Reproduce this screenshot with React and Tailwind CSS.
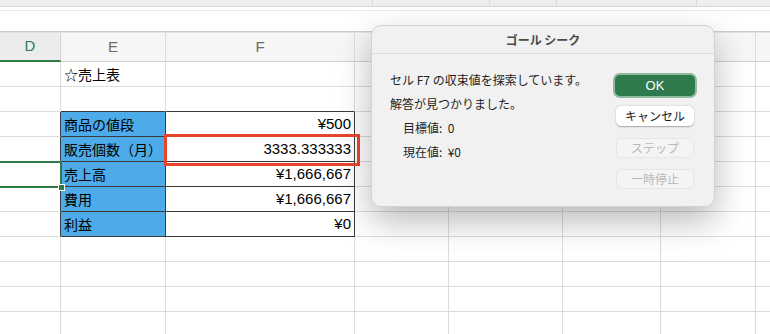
import React from 'react';

const FONT = { fontFamily: '"Liberation Sans", "Noto Sans CJK JP", sans-serif' };
const JP = { fontFamily: '"Noto Sans CJK JP", "Liberation Sans", sans-serif' };

const letters = ['D', 'E', 'F', 'G', 'H', 'I', 'J', ''];

// rows of the sheet: [E, F, style]
const rows = [
  { e: '☆売上表' },
  { e: '', top: true },
  { e: '商品の値段', f: '¥500', table: true },
  { e: '販売個数（月）', f: '3333.333333', table: true },
  { e: '売上高', f: '¥1,666,667', table: true },
  { e: '費用', f: '¥1,666,667', table: true },
  { e: '利益', f: '¥0', table: true },
  {}, {}, {}, {},
];

const Row = ({ row }) => {
  const dark = 'border-[#3a3a3a]';
  const light = 'border-[#dcdcdc]';
  return (
    <>
      <div className={`h-[25px] border-b border-r ${row.table ? 'border-r-[#3a3a3a] border-b-[#dcdcdc]' : light}`} />
      <div
        className={`h-[25px] border-b border-r flex items-center pl-[3px] text-[14px] text-black whitespace-nowrap overflow-visible ${
          row.table ? `bg-[#4dabe9] ${dark}` : row.top ? 'border-b-[#3a3a3a] border-r-[#dcdcdc]' : light
        }`}
        style={JP}
      >
        {row.e}
      </div>
      <div
        className={`h-[25px] border-b border-r flex items-center justify-end pr-[3px] text-[15px] text-black ${
          row.table ? dark : row.top ? 'border-b-[#3a3a3a] border-r-[#dcdcdc]' : light
        }`}
      >
        {row.f}
      </div>
      <div className={`h-[25px] border-b border-r ${light}`} />
      <div className={`h-[25px] border-b border-r ${light}`} />
      <div className={`h-[25px] border-b border-r ${light}`} />
      <div className={`h-[25px] border-b border-r ${light}`} />
      <div className={`h-[25px] border-b ${light}`} />
    </>
  );
};

const DialogButton = ({ children, disabled }) => (
  <div
    className={`w-[78px] h-[20px] rounded-[5px] flex items-center justify-center text-[12px] ${
      disabled
        ? 'bg-[#f4f4f4] text-[#b8b8b8] border border-[#e6e6e6]'
        : 'bg-white text-[#1a1a1a] shadow-[0_0.5px_1.5px_rgba(0,0,0,0.3)]'
    }`}
    style={JP}
  >
    {children}
  </div>
);

export default function App() {
  return (
    <div className="relative w-[770px] h-[334px] overflow-hidden bg-white" style={FONT}>
      {/* window chrome above the sheet */}
      <div className="flex h-[7px] bg-[#eeeeee] border-b border-[#d6d6d6]">
        <div className="w-[373px] border-r border-[#dddddd]" />
        <div className="w-[117px] border-r border-[#dddddd]" />
        <div className="w-[67px] border-r border-[#dddddd]" />
        <div className="w-[140px] border-r border-[#dddddd]" />
      </div>
      <div className="h-[3px]" />
      <div className="h-px bg-[#e8e8e8]" />
      <div className="h-[20px]" />
      <div className="h-px bg-[#cdcdcd]" />
      <div className="h-px bg-[#e3e3e3]" />

      {/* sheet */}
      <div className="grid grid-cols-[61px_105px_189px_94px_114px_98px_95px_14px]">
        {letters.map((l, i) => (
          <div
            key={i}
            className={`h-[29px] flex items-center justify-center text-[15px] ${
              i === 0
                ? 'bg-[#ececec] text-[#2f7b47] border-b-2 border-b-[#2f7b47] border-r border-r-[#d4d4d4]'
                : `bg-[#f6f6f6] text-[#6b6b6b] border-b border-b-[#d0d0d0] ${i < 7 ? 'border-r border-r-[#dcdcdc]' : ''}`
            }`}
          >
            {l}
          </div>
        ))}
        {rows.map((row, i) => (
          <Row key={i} row={row} />
        ))}
      </div>

      {/* selected cell */}
      <div className="absolute left-[-4px] top-[161px] w-[66px] h-[27px] border-2 border-[#2f7b47]" />
      <div className="absolute left-[59px] top-[185px] w-[5px] h-[5px] bg-[#2f7b47] ring-1 ring-white" />

      {/* goal cell highlight */}
      <div className="absolute left-[164px] top-[134px] w-[196px] h-[32px] border-[3px] border-[#e8452f]" />

      {/* goal seek dialog */}
      <div className="absolute left-[371px] top-[25px] w-[344px] h-[182px] rounded-[10px] bg-[#f1f1f1] border border-[#d2d2d2] shadow-[0_14px_34px_rgba(0,0,0,0.28)] flex flex-col">
        <div
          className="h-[28px] flex items-center justify-center text-[12px] font-bold text-[#4a4a4a] border-b border-[#dcdcdc]"
          style={JP}
        >
          ゴール シーク
        </div>
        <div className="flex flex-1">
          <div className="flex-1 pl-[18px] pt-[14px] text-[12px] text-[#1f1f1f] leading-[24px]" style={JP}>
            <div>セル F7 の収束値を探索しています。</div>
            <div>解答が見つかりました。</div>
            <div className="pl-[13px]">目標値:&nbsp;&nbsp;0</div>
            <div className="pl-[13px]">現在値:&nbsp;&nbsp;¥0</div>
          </div>
          <div className="w-[100px] flex flex-col items-center pt-[19px] pr-[18px]">
            <div className="w-[84px] h-[25px] rounded-[7px] bg-[#8dbb9b] p-[2px]">
              <div className="w-full h-full rounded-[5px] bg-[#2e7a4c] flex items-center justify-center text-white text-[13px]">
                OK
              </div>
            </div>
            <div className="mt-[8px]">
              <DialogButton>キャンセル</DialogButton>
            </div>
            <div className="mt-[12px]">
              <DialogButton disabled>ステップ</DialogButton>
            </div>
            <div className="mt-[11px]">
              <DialogButton disabled>一時停止</DialogButton>
            </div>
          </div>
        </div>
      </div>
    </div>
  );
}
